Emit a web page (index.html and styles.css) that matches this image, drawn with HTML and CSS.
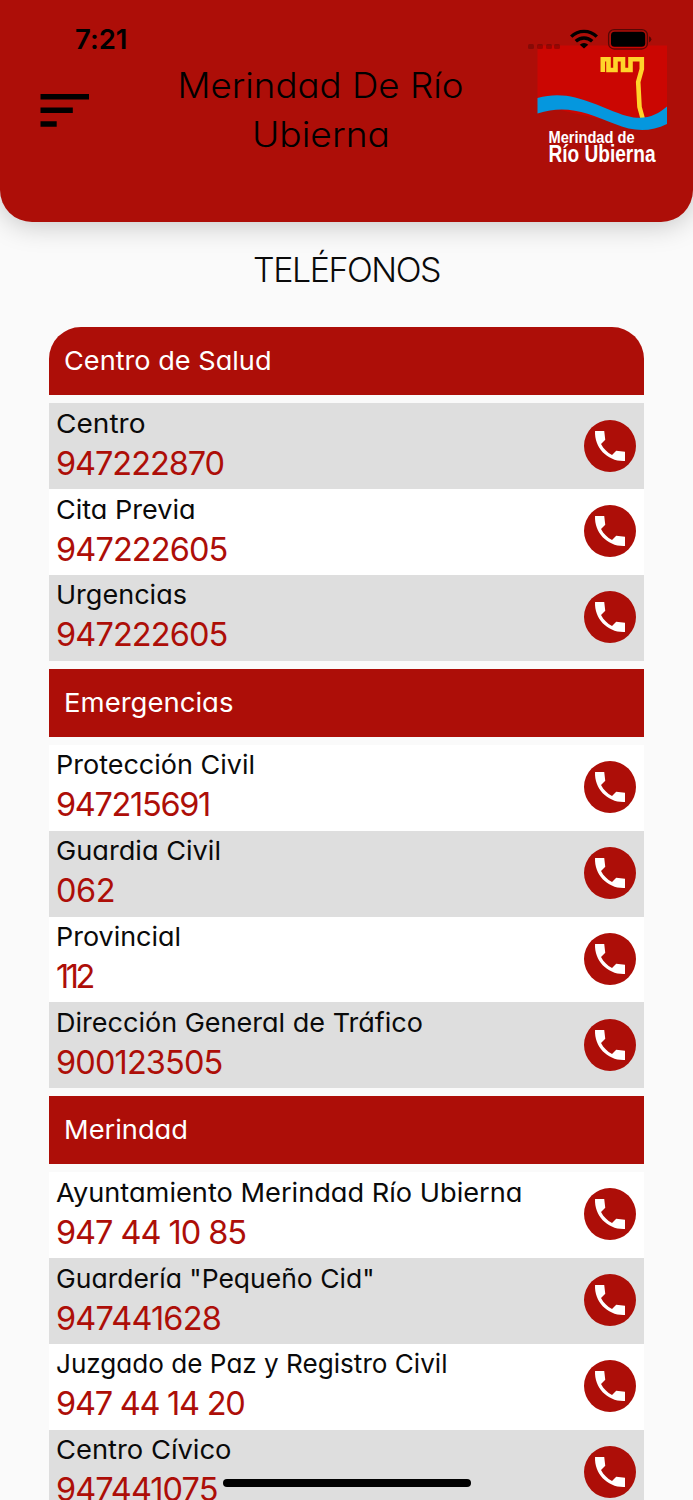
FILE: index.html
```html
<!DOCTYPE html>
<html lang="es">
<head>
    <meta charset="UTF-8">
    <meta name="viewport" content="width=device-width, initial-scale=1.0">
    <title>Merindad De Río Ubierna - Teléfonos</title>
    <link rel="stylesheet" href="styles.css">
</head>
<body>

<div class="status-bar">
    <span class="time"><span data-width="52.5">7:21</span></span>
    <svg class="status-icons" width="130" height="24" viewBox="0 0 130 24">
        <g fill="#000" opacity="0.22">
            <rect x="3" y="16" width="6" height="5" rx="1.5"/>
            <rect x="12" y="16" width="6" height="5" rx="1.5"/>
            <rect x="21" y="16" width="6" height="5" rx="1.5"/>
            <rect x="29" y="16" width="6" height="5" rx="1.5"/>
        </g>
        <g fill="none" stroke="#000" stroke-width="3.4">
            <path d="M46.2 8.6a18.4 18.4 0 0 1 25.6 0"/>
            <path d="M50.8 13.3a11.8 11.8 0 0 1 16.4 0"/>
        </g>
        <path d="M54.8 16.7a6 6 0 0 1 8.4 0L59 20.6z"/>
        <rect x="83.6" y="1.6" width="38.8" height="19.4" rx="5.6" fill="none" stroke="#000" stroke-width="1.3" opacity="0.5"/>
        <rect x="86" y="3.8" width="34.2" height="15" rx="3.6"/>
        <path d="M124 8.2q2.4 1 2.4 3.1t-2.4 3.1z" opacity="0.5"/>
    </svg>
</div>

<header>
    <svg class="menu" width="49" height="33" viewBox="0 0 49 33">
        <path d="M0.5 0H49v5.6H0.5zM0.5 13.5h32.3v5.5H0.5zM0.5 27.2h16.2v5.5H0.5z"/>
    </svg>
    <h1><span data-width="286">Merindad De Río</span><br><span data-width="138">Ubierna</span></h1>
    <svg class="logo" width="130" height="130" viewBox="0 0 130 130">
        <path d="M0.5 0.5H130V70L90 80L0.5 60z" fill="#cb0602"/>
        <path d="M65.8 27V14.3H71.5V25H78.5V14.3H86V25H93.5V14.3H104.8V24L101.2 37L102.5 62L105.8 74" fill="none" stroke="#ffd42a" stroke-width="4.6"/>
        <path d="M0.5 53C35 43 60 62 90 71C108 76 120 70 130 61.5V79C112 88 95 86 78 79C50 68 30 59 0.5 68.5z" fill="#0597de"/>
        <g class="logo-text">
            <text x="11.5" y="98" font-size="17" textLength="86" lengthAdjust="spacingAndGlyphs">Merindad de</text>
            <text x="11.5" y="117" font-size="24" textLength="107" lengthAdjust="spacingAndGlyphs">Río Ubierna</text>
        </g>
    </svg>
</header>

<main>
    <h2><span data-width="187">TELÉFONOS</span></h2>
    <div class="directory" id="directory"></div>
</main>

<div class="home-indicator"></div>

<script>
    // width = ancho del texto en px
    const sections = [
        { title: "Centro de Salud", width: 207.5, phones: [
            { name: "Centro", width: 89.5, number: "947222870", numberWidth: 168 },
            { name: "Cita Previa", width: 139.5, number: "947222605", numberWidth: 171.5 },
            { name: "Urgencias", width: 131, number: "947222605", numberWidth: 171.5 },
        ]},
        { title: "Emergencias", width: 169.5, phones: [
            { name: "Protección Civil", width: 199, number: "947215691", numberWidth: 154 },
            { name: "Guardia Civil", width: 165, number: "062", numberWidth: 59 },
            { name: "Provincial", width: 125, number: "112", numberWidth: 36 },
            { name: "Dirección General de Tráfico", width: 367, number: "900123505", numberWidth: 166.5 },
        ]},
        { title: "Merindad", width: 124, phones: [
            { name: "Ayuntamiento Merindad Río Ubierna", width: 466.5, number: "947 44 10 85", numberWidth: 190 },
            { name: "Guardería \"Pequeño Cid\"", width: 318.5, number: "947441628", numberWidth: 165 },
            { name: "Juzgado de Paz y Registro Civil", width: 391.5, number: "947 44 14 20", numberWidth: 188.5 },
            { name: "Centro Cívico", width: 175.5, number: "947441075", numberWidth: 161.5 },
        ]},
    ];

    function renderDirectory() {
        const directory = document.getElementById("directory");
        let count = 0;
        sections.forEach(section => {
            const rows = section.phones.map(phone => `
                <div class="phone-row ${count++ % 2 === 0 ? "gray" : ""}">
                    <div class="phone-info">
                        <p class="name"><span data-width="${phone.width}">${phone.name}</span></p>
                        <p class="number"><span data-width="${phone.numberWidth}">${phone.number}</span></p>
                    </div>
                    <a class="call" href="tel:${phone.number.replace(/ /g, "")}">
                        <svg width="40" height="40" viewBox="0 0 24 24"><path d="M21 15.46l-5.27-.61-2.52 2.52c-2.83-1.44-5.15-3.75-6.59-6.59l2.53-2.53L8.54 3H3.03C2.45 13.18 10.82 21.55 21 20.97v-5.51z"/></svg>
                    </a>
                </div>`).join("");
            directory.innerHTML += `
                <section>
                    <h3><span data-width="${section.width}">${section.title}</span></h3>
                    <div class="rows">${rows}</div>
                </section>`;
        });
    }

    function fitText() {
        document.querySelectorAll("[data-width]").forEach(el => {
            const target = Number(el.dataset.width);
            const width = el.getBoundingClientRect().width;
            if (width > target) {
                el.style.letterSpacing = ((target - width) / el.textContent.length).toFixed(3) + "px";
            } else {
                el.style.transform = `scaleX(${(target / width).toFixed(4)})`;
            }
        });
    }

    renderDirectory();
    fitText();
</script>

</body>
</html>
```
FILE: styles.css
```css
* {
    box-sizing: border-box;
}
body {
    font-family: Inter, "Open Sans", sans-serif;
    font-feature-settings: "cv11", "calt" 0;
    margin: 0;
    height: 1500px;
    overflow: hidden;
    position: relative;
    background: #fafafa;
    color: #0a0a0a;
}
h1, h2, h3, p {
    margin: 0;
    font-weight: 400;
    white-space: nowrap;
}
[data-width] {
    display: inline-block;
    transform-origin: left;
}
.status-bar {
    position: absolute;
    top: 24px;
    left: 75px;
    right: 38px;
    display: flex;
    justify-content: space-between;
    color: #000;
}
.time {
    font-size: 27px;
    font-weight: 600;
    line-height: 31px;
}
.status-icons {
    margin-top: 4px;
}
header {
    display: flex;
    align-items: flex-start;
    height: 222px;
    padding: 45px 26px 0 40px;
    background: #ad0e08;
    border-radius: 0 0 32px 32px;
    box-shadow: 0 3px 28px rgba(0, 0, 0, 0.22);
}
.menu {
    margin-top: 49px;
}
header h1 {
    flex: 1;
    padding: 16px 0 0 16px;
    text-align: center;
    font-size: 35px;
    font-weight: 300;
    line-height: 48.6px;
    color: #000;
    margin-right: 1px;
}
h1 [data-width], h2 [data-width] {
    transform-origin: center;
}
.logo-text {
    font-family: "Liberation Sans Narrow", "Liberation Sans", sans-serif;
    font-weight: 700;
    fill: #fff;
}
main {
    padding: 0 49px;
}
h2 {
    height: 105.4px;
    padding-top: 25px;
    text-align: center;
    font-size: 34px;
    font-weight: 300;
    line-height: 46px;
}
.directory {
    display: grid;
    gap: 8.2px;
}
h3 {
    height: 67.8px;
    padding-left: 15px;
    background: #ad0e08;
    color: #fff;
    font-size: 26px;
    line-height: 67px;
}
section:first-child h3 {
    border-radius: 32px 32px 0 0;
}
.rows {
    margin-top: 8.2px;
}
.phone-row {
    display: flex;
    justify-content: space-between;
    height: 85.8px;
    padding: 0 8px 0 7px;
    background: #fff;
}
.phone-row.gray {
    background: #dedede;
}
.phone-info {
    padding-top: 0.5px;
}
.name {
    font-size: 26px;
    line-height: 40px;
}
.number {
    font-size: 32.5px;
    line-height: 40px;
    color: #ad0e08;
}
.call {
    display: flex;
    align-items: center;
    justify-content: center;
    width: 52px;
    height: 52px;
    margin-top: 16.2px;
    border-radius: 50%;
    background: #ad0e08;
}
.call svg {
    fill: #fff;
}
.home-indicator {
    position: absolute;
    left: 223px;
    top: 1479px;
    width: 248px;
    height: 8px;
    border-radius: 4px;
    background: #000;
}
```
